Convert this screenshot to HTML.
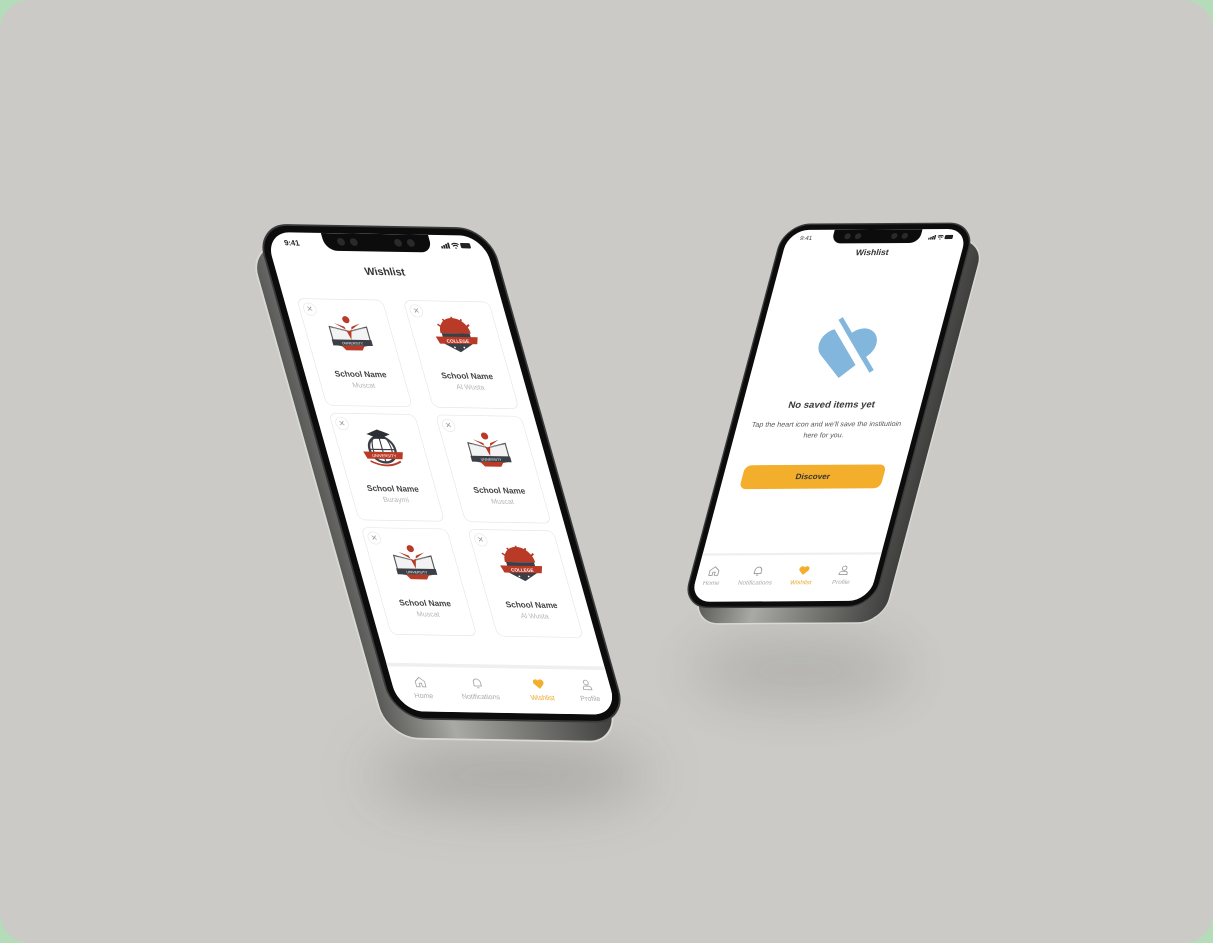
<!DOCTYPE html>
<html><head><meta charset="utf-8"><style>
*{margin:0;padding:0;box-sizing:border-box}
html,body{width:1213px;height:943px;overflow:hidden;background:#b5dcb8}
#bg{position:absolute;left:0;top:0;width:1213px;height:943px;background:#cbcac6;border-radius:30px;overflow:hidden}
.sh{position:absolute;border-radius:50%;background:rgba(90,90,85,.3);filter:blur(28px)}
.ph{position:absolute;left:0;top:0;width:375px;height:812px;transform-origin:0 0;font-family:"Liberation Sans",sans-serif}
.silver{position:absolute;left:-14px;top:-14px;width:403px;height:840px;border-radius:56px;background:linear-gradient(90deg,#5a5a58,#a9a9a5 30%,#7a7a77 60%,#3f3f3d);border:3px solid #d8d8d4}
.bez{position:absolute;left:-14px;top:-14px;width:403px;height:840px;border-radius:56px;background:#0c0c0c;border:3px solid #3a3a3a}
.scr{position:absolute;left:0;top:0;width:375px;height:812px;border-radius:42px;background:#fff;overflow:hidden}
.notch{position:absolute;left:96px;top:0;width:184px;height:30px;background:#0c0c0c;border-radius:0 0 20px 20px}
.notch i{position:absolute;top:8px;width:13px;height:13px;border-radius:50%;background:#2a2a2a}
.time{position:absolute;left:28px;top:10px;font-size:13px;font-weight:bold;color:#222}
.stat{position:absolute;right:26px;top:12px;width:52px;height:11px}
.title{position:absolute;left:0;width:375px;text-align:center;font-weight:bold;color:#333;font-size:18px}
.card{position:absolute;width:148px;height:182px;border:1.5px solid #e2e2e2;border-radius:12px;background:#fff}
.x{position:absolute;left:6px;top:6px;width:22px;height:22px;border-radius:50%;border:1px solid #e6e6e6;color:#999;font-size:13px;text-align:center;line-height:20px}
.logo{position:absolute;left:34px;top:24px;width:80px;height:72px}
.nm{position:absolute;top:118px;width:100%;text-align:center;font-size:14px;font-weight:bold;color:#444}
.lc{position:absolute;top:138px;width:100%;text-align:center;font-size:12px;color:#b5b5b5}
.nav{position:absolute;left:0;top:730px;width:375px;height:82px;border-top:6px solid #efefef;background:#fff}
.it{position:absolute;width:100px;margin-left:-50px;text-align:center;font-size:12px;color:#aaa}
.it svg{display:block;margin:0 auto 4px}
</style></head><body><div id="bg">
<div class="sh" style="left:370px;top:745px;width:280px;height:60px"></div>
<div class="sh" style="left:690px;top:640px;width:220px;height:60px;opacity:.8"></div>

<!-- LEFT PHONE -->
<div class="ph" style="transform:translate(265px,232px) matrix(0.582,0.01,0.166,0.59,0,0)">
 <div class="silver" style="transform:translate(-22px,34px)"></div>
 <div class="bez"></div>
 <div class="scr">
  <div class="notch"><i style="left:24px"></i><i style="left:46px"></i><i style="left:122px"></i><i style="left:144px"></i></div>
  <div class="time">9:41</div>
  <svg class="stat" viewBox="0 0 52 11"><rect x="0" y="7" width="3" height="4" fill="#222"/><rect x="4" y="5" width="3" height="6" fill="#222"/><rect x="8" y="3" width="3" height="8" fill="#222"/><rect x="12" y="1" width="3" height="10" fill="#222"/><path d="M19 4a9 9 0 0 1 12 0M21 7a5 5 0 0 1 8 0" stroke="#222" stroke-width="2" fill="none"/><circle cx="25" cy="10" r="1.3" fill="#222"/><rect x="34" y="1" width="17" height="9" rx="2" fill="#222"/></svg>
  <div class="title" style="top:54px">Wishlist</div>

  <svg width="0" height="0" style="position:absolute"><defs>
   <g id="uni"><path d="M8 22 L40 30 L72 22 L72 52 L40 58 L8 52Z" fill="#f3f3f3" stroke="#555" stroke-width="2"/><path d="M14 24 L40 30 L66 24" stroke="#999" fill="none"/><circle cx="40" cy="10" r="6" fill="#b83a27"/><path d="M18 16 L40 30 L62 16 L46 22 L40 44 L34 22Z" fill="#b83a27"/><rect x="6" y="44" width="68" height="10" fill="#3b3f46"/><path d="M20 54 L60 54 L54 62 L26 62Z" fill="#b83a27"/><text x="40" y="52" font-size="6" fill="#fff" text-anchor="middle" font-family="Liberation Sans">UNIVERSITY</text></g>
   <g id="col"><path d="M14 30 A26 26 0 0 1 66 30Z" fill="#b83a27"/><g stroke="#b83a27" stroke-width="3"><path d="M40 2v6M24 6l3 5M56 6l-3 5M13 15l5 4M67 15l-5 4"/></g><path d="M16 30 L64 30 L64 48 L40 62 L16 48Z" fill="#3b3f46"/><path d="M4 36 L76 36 L72 48 L8 48Z" fill="#b83a27"/><text x="40" y="46" font-size="8" fill="#fff" text-anchor="middle" font-weight="bold" font-family="Liberation Sans">COLLEGE</text><circle cx="32" cy="54" r="1.5" fill="#fff"/><circle cx="48" cy="54" r="1.5" fill="#fff"/></g>
   <g id="glo"><circle cx="40" cy="36" r="22" fill="none" stroke="#3b3f46" stroke-width="4"/><path d="M40 14v44M18 36h44M28 18q-8 18 0 36M52 18q8 18 0 36" stroke="#3b3f46" stroke-width="2" fill="none"/><path d="M20 10 L40 2 L60 10 L40 18Z" fill="#2c2f34"/><rect x="30" y="12" width="20" height="6" fill="#2c2f34"/><path d="M6 40 L74 40 L70 52 L10 52Z" fill="#b83a27"/><text x="40" y="49" font-size="7" fill="#fff" text-anchor="middle" font-family="Liberation Sans">UNIVERSITY</text><path d="M14 56 Q40 70 66 56" stroke="#b83a27" stroke-width="3" fill="none"/></g>
  </defs></svg>

  <div class="card" style="left:22px;top:112px"><div class="x">✕</div><svg class="logo" viewBox="0 0 80 72"><use href="#uni"/></svg><div class="nm">School Name</div><div class="lc">Muscat</div></div>
  <div class="card" style="left:205px;top:112px"><div class="x">✕</div><svg class="logo" viewBox="0 0 80 72"><use href="#col"/></svg><div class="nm">School Name</div><div class="lc">Al Wusta</div></div>
  <div class="card" style="left:22px;top:306px"><div class="x">✕</div><svg class="logo" viewBox="0 0 80 72"><use href="#glo"/></svg><div class="nm">School Name</div><div class="lc">Buraymi</div></div>
  <div class="card" style="left:205px;top:306px"><div class="x">✕</div><svg class="logo" viewBox="0 0 80 72"><use href="#uni"/></svg><div class="nm">School Name</div><div class="lc">Muscat</div></div>
  <div class="card" style="left:22px;top:500px"><div class="x">✕</div><svg class="logo" viewBox="0 0 80 72"><use href="#uni"/></svg><div class="nm">School Name</div><div class="lc">Muscat</div></div>
  <div class="card" style="left:205px;top:500px"><div class="x">✕</div><svg class="logo" viewBox="0 0 80 72"><use href="#col"/></svg><div class="nm">School Name</div><div class="lc">Al Wusta</div></div>

  <div class="nav">
   <div class="it" style="left:49px;top:14px"><svg width="24" height="24" viewBox="0 0 24 24" fill="none" stroke="#aaa" stroke-width="1.6"><path d="M4 11 L12 4 L20 11 V20 H14 V14 H10 V20 H4Z"/></svg>Home</div>
   <div class="it" style="left:147px;top:14px"><svg width="24" height="24" viewBox="0 0 24 24" fill="none" stroke="#aaa" stroke-width="1.6"><path d="M6 17 V11 a6 6 0 0 1 12 0 V17 H5 H19 M10 20 h4"/></svg>Notifications</div>
   <div class="it" style="left:253px;top:14px;color:#e9a82a"><svg width="24" height="24" viewBox="0 0 24 24"><path d="M12 20 L4 12 A4.5 4.5 0 0 1 12 6 A4.5 4.5 0 0 1 20 12Z" fill="#f3ae2c"/></svg>Wishlist</div>
   <div class="it" style="left:335px;top:14px"><svg width="24" height="24" viewBox="0 0 24 24" fill="none" stroke="#aaa" stroke-width="1.6"><circle cx="12" cy="8" r="4"/><path d="M5 20 v-2 a4 4 0 0 1 4-4 h6 a4 4 0 0 1 4 4 v2Z"/></svg>Profile</div>
  </div>
 </div>
</div>

<!-- RIGHT PHONE -->
<div class="ph" style="transform:translate(789px,230px) matrix(0.477,-0.003,-0.122,0.458,0,0)">
 <div class="silver" style="transform:translate(30px,36px)"></div>
 <div class="bez"></div>
 <div class="scr">
  <div class="notch"><i style="left:24px"></i><i style="left:46px"></i><i style="left:122px"></i><i style="left:144px"></i></div>
  <div class="time" style="font-weight:normal;color:#444">9:41</div>
  <svg class="stat" viewBox="0 0 52 11"><rect x="0" y="7" width="3" height="4" fill="#222"/><rect x="4" y="5" width="3" height="6" fill="#222"/><rect x="8" y="3" width="3" height="8" fill="#222"/><rect x="12" y="1" width="3" height="10" fill="#222"/><path d="M19 4a9 9 0 0 1 12 0M21 7a5 5 0 0 1 8 0" stroke="#222" stroke-width="2" fill="none"/><circle cx="25" cy="10" r="1.3" fill="#222"/><rect x="34" y="1" width="17" height="9" rx="2" fill="#222"/></svg>
  <div class="title" style="top:40px">Wishlist</div>
  <svg style="position:absolute;left:115px;top:190px" width="145" height="145" viewBox="0 0 135 135"><path d="M67 125 L18 76 A27 27 0 0 1 67 36 A27 27 0 0 1 116 76Z" fill="#82b6dc"/><path d="M30 10 L118 118" stroke="#fff" stroke-width="14"/><path d="M40 4 L128 112" stroke="#82b6dc" stroke-width="9"/></svg>
  <div class="title" style="top:372px;font-size:20px;color:#3a3a3a">No saved items yet</div>
  <div style="position:absolute;left:30px;top:414px;width:315px;text-align:center;font-size:15px;line-height:24px;color:#555">Tap the heart icon and we'll save the institutioin here for you.</div>
  <div style="position:absolute;left:40px;top:514px;width:296px;height:52px;border-radius:14px;background:#f3ae2c;text-align:center;line-height:52px;font-size:17px;font-weight:bold;color:#333">Discover</div>
  <div class="nav" style="top:706px;border-top-width:5px">
   <div class="it" style="left:34px;top:20px;font-size:13px"><svg width="28" height="28" viewBox="0 0 24 24" fill="none" stroke="#999" stroke-width="1.6"><path d="M4 11 L12 4 L20 11 V20 H14 V14 H10 V20 H4Z"/></svg>Home</div>
   <div class="it" style="left:126px;top:20px;font-size:13px"><svg width="28" height="28" viewBox="0 0 24 24" fill="none" stroke="#999" stroke-width="1.6"><path d="M6 17 V11 a6 6 0 0 1 12 0 V17 H5 H19 M10 20 h4"/></svg>Notifications</div>
   <div class="it" style="left:222px;top:20px;font-size:13px;color:#e9a82a"><svg width="28" height="28" viewBox="0 0 24 24"><path d="M12 20 L4 12 A4.5 4.5 0 0 1 12 6 A4.5 4.5 0 0 1 20 12Z" fill="#f3ae2c"/></svg>Wishlist</div>
   <div class="it" style="left:306px;top:20px;font-size:13px"><svg width="28" height="28" viewBox="0 0 24 24" fill="none" stroke="#999" stroke-width="1.6"><circle cx="12" cy="8" r="4"/><path d="M5 20 v-2 a4 4 0 0 1 4-4 h6 a4 4 0 0 1 4 4 v2Z"/></svg>Profile</div>
  </div>
 </div>
</div>
</div></body></html>
